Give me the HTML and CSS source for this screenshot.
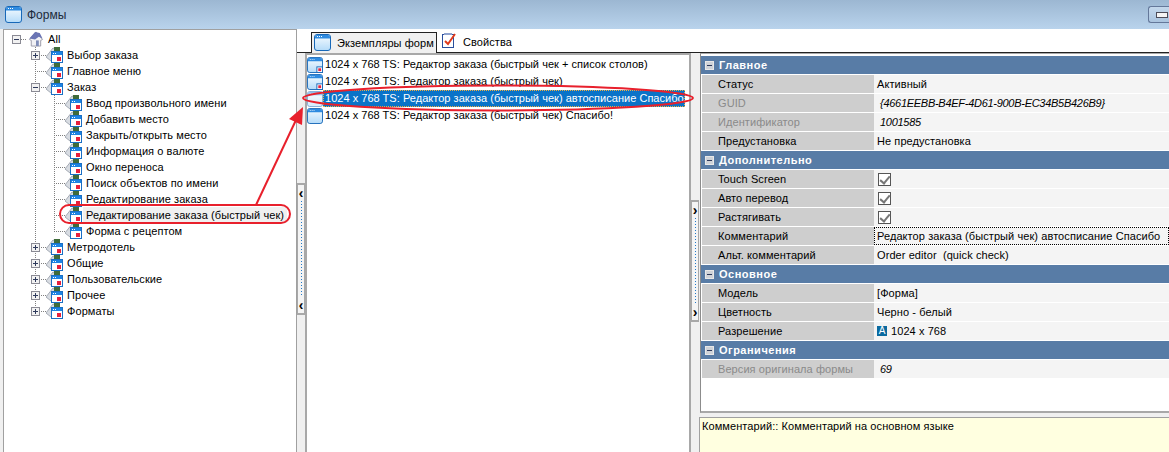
FILE: index.html
```html
<!DOCTYPE html>
<html>
<head>
  <title>Формы</title>
  <link rel="stylesheet" href="styles.css">
</head>
<body>
  <svg class="defs" width="0" height="0">
    <defs>
      <linearGradient id="glass" x1="0" y1="0" x2="0" y2="1">
        <stop offset="0" stop-color="#f8fcff"/>
        <stop offset="1" stop-color="#b4dbf9"/>
      </linearGradient>
      <symbol id="form" viewBox="0 0 17 17">
        <rect x="0.5" y="0.5" width="16" height="16" rx="2.5" fill="url(#glass)" stroke="#1768b8"/>
        <path d="M1 4.5V3a2 2 0 0 1 2-2h11a2 2 0 0 1 2 2v1.500z" fill="#2f8be0"/>
        <path d="M3 2h1v1H3zM5 2h1v1H5zM7 2h1v1H7z" fill="#fff"/>
      </symbol>
      <symbol id="form-red" viewBox="0 0 17 17">
        <use href="#form"/>
        <rect x="10.5" y="10.5" width="6" height="6" fill="#fff" stroke="#1768b8"/>
        <rect x="12" y="12" width="3" height="3" fill="#e8203c"/>
      </symbol>
      <symbol id="node" viewBox="0 0 17 16">
        <path d="M0 10 7 1l4 2v11H5z" fill="#d8dce2" stroke="#a4aab4"/>
        <path d="M8 0h6v4H8z" fill="#3f6b3a"/>
        <rect x="5.5" y="4.5" width="11" height="11" fill="#fff" stroke="#1a6fc4"/>
        <path d="M6 5h10v3H6z" fill="#1d84e4"/>
        <path d="M7 6h1v1H7zM9 6h1v1H9z" fill="#fff"/>
        <rect x="11" y="10" width="4" height="4" fill="#e8203c"/>
      </symbol>
      <symbol id="home" viewBox="0 0 17 17">
        <path d="M2 9 9 1l7 8-2 1v6H4v-6z" fill="#f1f1f4" stroke="#9a9aa8"/>
        <path d="M2 8 8 1l5 1 3 6-4-2-4 3z" fill="#6a74b4"/>
        <path d="M9 10h3v6H9z" fill="#7f8db8"/>
      </symbol>
    </defs>
  </svg>

  <div class="title-bar">
    <svg class="ico-form"><use href="#form"/></svg>
    <span class="title-text">Формы</span>
    <span class="min-btn"><span class="min-mark"></span></span>
  </div>

  <div class="main">
    <div class="tree">
      <div class="row"><span class="cell exp-root"><span class="box minus"></span></span><svg class="ico"><use href="#home"/></svg><span class="node-text">All</span></div>
      <div class="row"><span class="cell"></span><span class="cell tee"><span class="box plus"></span></span><svg class="ico"><use href="#node"/></svg><span class="node-text">Выбор заказа</span></div>
      <div class="row"><span class="cell"></span><span class="cell tee"></span><svg class="ico"><use href="#node"/></svg><span class="node-text">Главное меню</span></div>
      <div class="row"><span class="cell"></span><span class="cell tee"><span class="box minus"></span></span><svg class="ico"><use href="#node"/></svg><span class="node-text">Заказ</span></div>
      <div class="row"><span class="cell"></span><span class="cell vert"></span><span class="cell tee"></span><svg class="ico"><use href="#node"/></svg><span class="node-text">Ввод произвольного имени</span></div>
      <div class="row"><span class="cell"></span><span class="cell vert"></span><span class="cell tee"></span><svg class="ico"><use href="#node"/></svg><span class="node-text">Добавить место</span></div>
      <div class="row"><span class="cell"></span><span class="cell vert"></span><span class="cell tee"></span><svg class="ico"><use href="#node"/></svg><span class="node-text">Закрыть/открыть место</span></div>
      <div class="row"><span class="cell"></span><span class="cell vert"></span><span class="cell tee"></span><svg class="ico"><use href="#node"/></svg><span class="node-text">Информация о валюте</span></div>
      <div class="row"><span class="cell"></span><span class="cell vert"></span><span class="cell tee"></span><svg class="ico"><use href="#node"/></svg><span class="node-text">Окно переноса</span></div>
      <div class="row"><span class="cell"></span><span class="cell vert"></span><span class="cell tee"></span><svg class="ico"><use href="#node"/></svg><span class="node-text">Поиск объектов по имени</span></div>
      <div class="row"><span class="cell"></span><span class="cell vert"></span><span class="cell tee"></span><svg class="ico"><use href="#node"/></svg><span class="node-text">Редактирование заказа</span></div>
      <div class="row"><span class="cell"></span><span class="cell vert"></span><span class="cell tee"></span><svg class="ico"><use href="#node"/></svg><span class="node-text picked">Редактирование заказа (быстрый чек)</span></div>
      <div class="row"><span class="cell"></span><span class="cell vert"></span><span class="cell end"></span><svg class="ico"><use href="#node"/></svg><span class="node-text">Форма с рецептом</span></div>
      <div class="row"><span class="cell"></span><span class="cell tee"><span class="box plus"></span></span><svg class="ico"><use href="#node"/></svg><span class="node-text">Метродотель</span></div>
      <div class="row"><span class="cell"></span><span class="cell tee"><span class="box plus"></span></span><svg class="ico"><use href="#node"/></svg><span class="node-text">Общие</span></div>
      <div class="row"><span class="cell"></span><span class="cell tee"><span class="box plus"></span></span><svg class="ico"><use href="#node"/></svg><span class="node-text">Пользовательские</span></div>
      <div class="row"><span class="cell"></span><span class="cell tee"><span class="box plus"></span></span><svg class="ico"><use href="#node"/></svg><span class="node-text">Прочее</span></div>
      <div class="row"><span class="cell"></span><span class="cell end"><span class="box plus"></span></span><svg class="ico"><use href="#node"/></svg><span class="node-text">Форматы</span></div>
    </div>

    <div class="work">
      <div class="tabs">
        <div class="tab active"><svg class="ico-form"><use href="#form"/></svg><span>Экземпляры форм</span></div>
        <div class="tab">
          <svg class="ico-props" viewBox="0 0 16 17">
            <rect x="1.5" y="2.5" width="11" height="13" fill="#fff" stroke="#2b4f9c"/>
            <path d="M3 1h8v2H3z" fill="#8fa3cf"/>
            <path d="M4 9l3 3 7-10" fill="none" stroke="#e03a1c" stroke-width="2"/>
          </svg>
          <span>Свойства</span>
        </div>
      </div>
      <div class="panes">
        <div class="split split-left">
          <div class="grip"><span class="arrow">‹</span><span class="dots"></span><span class="arrow">‹</span></div>
        </div>
        <div class="list">
          <div class="item"><svg class="ico-item"><use href="#form-red"/></svg><span class="item-text">1024 x 768 TS: Редактор заказа (быстрый чек + список столов)</span></div>
          <div class="item"><svg class="ico-item"><use href="#form-red"/></svg><span class="item-text">1024 x 768 TS: Редактор заказа (быстрый чек)</span></div>
          <div class="item"><svg class="ico-item dim"><use href="#form"/></svg><span class="item-text selected">1024 x 768 TS: Редактор заказа (быстрый чек) автосписание Спасибо</span></div>
          <div class="item"><svg class="ico-item"><use href="#form"/></svg><span class="item-text">1024 x 768 TS: Редактор заказа (быстрый чек) Спасибо!</span></div>
        </div>
        <div class="split split-right">
          <div class="grip"><span class="arrow">›</span><span class="dots"></span><span class="arrow">›</span></div>
        </div>
        <div class="side">
          <div class="props">
            <div class="group"><span class="box minus"></span>Главное</div>
            <div class="prop"><span class="key">Статус</span><span class="val">Активный</span></div>
            <div class="prop"><span class="key off">GUID</span><span class="val fixed">{4661EEBB-B4EF-4D61-900B-EC34B5B426B9}</span></div>
            <div class="prop"><span class="key off">Идентификатор</span><span class="val fixed">1001585</span></div>
            <div class="prop"><span class="key">Предустановка</span><span class="val">Не предустановка</span></div>
            <div class="group"><span class="box minus"></span>Дополнительно</div>
            <div class="prop"><span class="key">Touch Screen</span><span class="val"><span class="check"></span></span></div>
            <div class="prop"><span class="key">Авто перевод</span><span class="val"><span class="check"></span></span></div>
            <div class="prop"><span class="key">Растягивать</span><span class="val"><span class="check"></span></span></div>
            <div class="prop"><span class="key">Комментарий</span><span class="val focus">Редактор заказа (быстрый чек) автосписание Спасибо</span></div>
            <div class="prop"><span class="key">Альт. комментарий</span><span class="val">Order editor&nbsp; (quick check)</span></div>
            <div class="group"><span class="box minus"></span>Основное</div>
            <div class="prop"><span class="key">Модель</span><span class="val">[Форма]</span></div>
            <div class="prop"><span class="key">Цветность</span><span class="val">Черно - белый</span></div>
            <div class="prop"><span class="key">Разрешение</span><span class="val"><span class="res-icon">A</span>1024 x 768</span></div>
            <div class="group"><span class="box minus"></span>Ограничения</div>
            <div class="prop"><span class="key off">Версия оригинала формы</span><span class="val fixed">69</span></div>
          </div>
          <div class="note">Комментарий:: Комментарий на основном языке</div>
        </div>
      </div>
    </div>
  </div>

  <!-- red marks drawn over the screenshot -->
  <svg class="marks" width="1169" height="452" viewBox="0 0 1169 452">
    <rect x="60" y="205" width="230" height="18" rx="9" fill="none" stroke="#e8202c" stroke-width="2"/>
    <ellipse cx="498" cy="98" rx="195" ry="12.5" fill="none" stroke="#e8202c" stroke-width="2"/>
    <path d="M256 205 296 120" fill="none" stroke="#e8202c" stroke-width="2"/>
    <path d="M303 107 289 119 302 125z" fill="#e8202c"/>
  </svg>
</body>
</html>
```

FILE: styles.css
```css
html, body { margin: 0; height: 100%; }
body { width: 1169px; height: 452px; overflow: hidden; background: #f0f0f0; color: #000; font-family: "Liberation Sans", Arial, sans-serif; font-size: 11px; letter-spacing: 0.08px; }
.defs { display: block; height: 0; }

.title-bar { height: 29px; display: flex; align-items: center; padding-left: 5px; background: linear-gradient(#9cb7d2, #b9d3ec); }
.ico-form { width: 17px; height: 17px; flex: none; }
.title-text { margin-left: 5px; color: #1c2a3a; font-size: 12px; letter-spacing: 0; }
.min-btn { margin-left: auto; margin-right: -1px; width: 22px; height: 17px; display: flex; align-items: center; justify-content: flex-end; padding-right: 2px; box-sizing: border-box; border: 1px solid #64789a; border-right: 0; border-radius: 3px 0 0 3px; background: linear-gradient(#c4d8ec, #aac4df); }
.min-mark { width: 10px; height: 4px; border: 1px solid #4c4c58; background: #f4f4f4; box-sizing: content-box; }

.main { display: flex; height: 423px; padding-left: 3px; }

.tree { width: 288px; flex: none; padding: 1px 0 0 4px; border: 1px solid #a0a0a0; border-bottom: 0; background: #fff; }
.row { display: flex; height: 16px; align-items: center; }
.cell { width: 19px; height: 16px; flex: none; display: flex; align-items: center; padding-left: 4px; box-sizing: border-box; background-repeat: no-repeat; }
.vert { background-image: repeating-linear-gradient(#808080 0 1px, transparent 1px 2px); background-size: 1px 16px; background-position: 8px 0; }
.tee { background-image: repeating-linear-gradient(#808080 0 1px, transparent 1px 2px), repeating-linear-gradient(90deg, #808080 0 1px, transparent 1px 2px); background-size: 1px 16px, 11px 1px; background-position: 8px 0, 8px 8px; }
.end { background-image: repeating-linear-gradient(#808080 0 1px, transparent 1px 2px), repeating-linear-gradient(90deg, #808080 0 1px, transparent 1px 2px); background-size: 1px 8px, 11px 1px; background-position: 8px 0, 8px 8px; }
.exp-root { background-image: repeating-linear-gradient(90deg, #808080 0 1px, transparent 1px 2px); background-size: 6px 1px; background-position: 13px 8px; }
.ico { width: 17px; height: 16px; flex: none; }
.node-text { margin-left: 4px; line-height: 16px; white-space: nowrap; }
.picked { margin-left: 1px; padding: 0 3px; background: #f0f0f0; }

.box { width: 9px; height: 9px; flex: none; box-sizing: border-box; display: block; border: 1px solid #8a8a94; background-color: #f2f2f2; background-repeat: no-repeat; }
.minus { background-image: linear-gradient(#2e3a5c, #2e3a5c); background-size: 5px 1px; background-position: center; }
.plus { background-image: linear-gradient(#2e3a5c, #2e3a5c), linear-gradient(#2e3a5c, #2e3a5c); background-size: 5px 1px, 1px 5px; background-position: center, center; }

.work { flex: 1; display: flex; flex-direction: column; min-width: 0; background: #f0f0f0; }
.tabs { height: 23px; flex: none; display: flex; align-items: flex-end; padding-left: 14px; background: #fff; border-bottom: 1px solid #222; }
.tab { height: 20px; display: flex; align-items: center; gap: 5px; padding: 0 4px; white-space: nowrap; }
.tab.active { height: 21px; margin-bottom: -1px; background: #f0f0f0; border: 1px solid #222; border-bottom: 0; box-sizing: border-box; width: 126px; padding: 0 2px; gap: 6px; }
.tab.active .ico-form { margin-top: -2px; }
.ico-props { width: 16px; height: 17px; flex: none; margin-top: -4px; margin-right: 1px; }

.panes { flex: 1; display: flex; min-height: 0; }
.split { flex: none; width: 8px; display: flex; box-sizing: border-box; }
.split-left { padding-top: 130px; }
.split-right { padding-top: 147px; }
.grip { width: 8px; height: 132px; box-sizing: border-box; display: flex; flex-direction: column; align-items: center; border: 1px solid #a8a8a8; border-width: 2px 1px; background: #f4f4f4; }
.split-right .grip { height: 122px; }
.arrow { height: 14px; line-height: 12px; font-size: 14px; font-weight: bold; color: #000; margin-top: 2px; flex: none; }
.dots { flex: 1; width: 1px; background: repeating-linear-gradient(#1f78c8 0 1px, transparent 1px 3px); }

.list { width: 386px; flex: none; padding-top: 1px; box-sizing: border-box; background: #fff; border: 2px solid #a8a8a8; border-bottom: 0; }
.item { height: 17px; display: flex; align-items: center; }
.ico-item { width: 16px; height: 16px; flex: none; }
.dim { opacity: 0.55; }
.item-text { padding: 0 1px 0 2px; line-height: 16px; white-space: nowrap; height: 17px; box-sizing: border-box; letter-spacing: 0.03px; }
.selected { background: #0a73c8; color: #fff; outline: 1px dotted #f0b040; outline-offset: -1px; }

.side { flex: 1; display: flex; flex-direction: column; min-width: 0; }
.props { height: 360px; flex: none; box-sizing: border-box; padding-top: 2px; margin-left: 1px; background: #fff; border-left: 1px solid #8c8c8c; border-top: 1px solid #a8a8a8; border-bottom: 2px solid #a8a8a8; }
.group { height: 18px; margin-bottom: 1px; display: flex; align-items: center; background: #587ca6; color: #fff; font-weight: bold; letter-spacing: 0.5px; padding-left: 4px; }
.group .box { margin-right: 5px; border-color: #e8e8e8; background-color: #cfd3d8; }
.prop { height: 18px; margin-bottom: 1px; display: flex; padding-left: 1px; }
.key { width: 172px; flex: none; background: #cecece; padding-left: 16px; box-sizing: border-box; line-height: 18px; white-space: nowrap; }
.off { color: #8a8a8a; }
.val { flex: 1; background: #f4f4f4; padding-left: 3px; line-height: 18px; white-space: nowrap; display: flex; align-items: center; }
.fixed { font-style: italic; padding-left: 6px; letter-spacing: -0.28px; }
.focus { outline: 1px dotted #000; outline-offset: -1px; }
.check { width: 13px; height: 13px; box-sizing: border-box; border: 1px solid #555; background: #fff; position: relative; margin-left: 1px; }
.check::after { content: ""; position: absolute; left: 3px; top: 0; width: 4px; height: 8px; border: solid #777; border-width: 0 2px 2px 0; transform: rotate(40deg); }
.res-icon { width: 10px; height: 10px; flex: none; margin-right: 4px; background: #0a6aa0; color: #fff; font-size: 10px; line-height: 10px; text-align: center; }
.note { margin: 4px 0 0 0; flex: 1; box-sizing: border-box; padding: 2px; background: #ffffe0; border-left: 1px solid #a0a0a0; border-top: 1px solid #a0a0a0; white-space: nowrap; }

.marks { position: absolute; left: 0; top: 0; pointer-events: none; }
```
